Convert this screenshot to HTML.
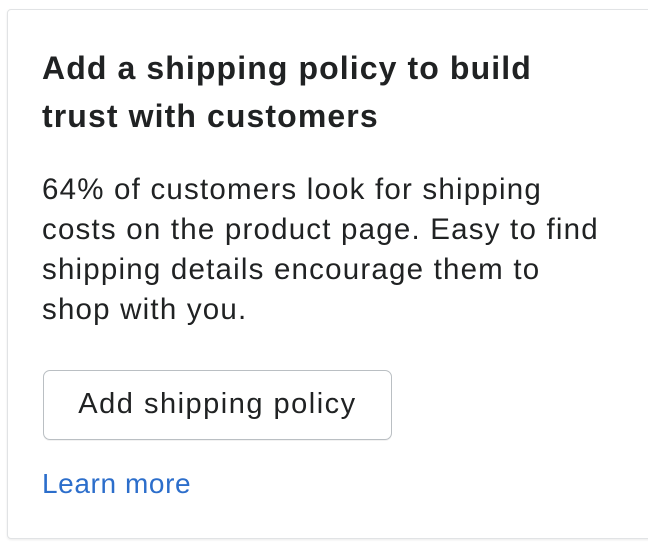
<!DOCTYPE html>
<html><head><style>
html,body{margin:0;padding:0;background:#fff;width:648px;height:546px;overflow:hidden;font-family:"Liberation Sans",sans-serif;color:#202223}
.card{position:absolute;left:7px;top:9px;width:700px;height:528px;border:1px solid #e1e3e5;border-radius:4px;box-shadow:0 1px 2px rgba(0,0,0,.08);background:#fff}
h1{position:absolute;left:34px;top:34px;margin:0;font-size:32px;font-weight:bold;line-height:48px;width:560px;letter-spacing:1.1px}
p{position:absolute;left:34px;top:160px;margin:0;font-size:29.5px;line-height:40px;width:600px;letter-spacing:1.2px;white-space:nowrap}
.btn{position:absolute;left:35px;top:360px;width:349px;height:70px;border:1.5px solid #babfc3;border-radius:7px;box-sizing:border-box;font-size:29px;text-align:center;line-height:67px;letter-spacing:1.5px;box-shadow:0 1px 0 rgba(0,0,0,.05)}
a{position:absolute;left:34px;top:456px;font-size:28px;color:#2c6ecb;text-decoration:none;line-height:36px;letter-spacing:0.6px}
</style></head><body>
<div class="card">
<h1>Add a shipping policy to build<br>trust with customers</h1>
<p>64% of customers look for shipping<br>costs on the product page. Easy to find<br>shipping details encourage them to<br>shop with you.</p>
<div class="btn">Add shipping policy</div>
<a>Learn more</a>
</div>
</body></html>
